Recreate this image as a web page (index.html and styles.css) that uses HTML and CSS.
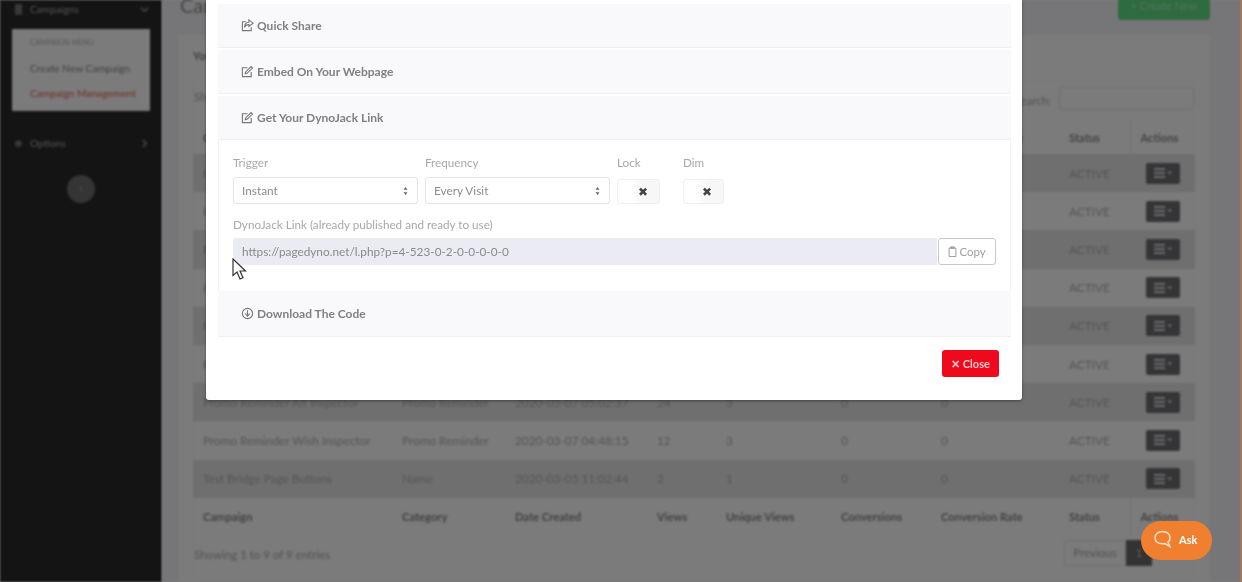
FILE: index.html
```html
<!DOCTYPE html>
<html lang="en">
<head>
<meta charset="utf-8">
<title>Campaign Management</title>
<link rel="stylesheet" href="styles.css">
</head>
<body>
<div class="app">
  <aside class="sidebar">
    <div class="nav-item">
      <svg class="nav-icon" viewBox="0 0 10 12"><path d="M1 0h8v12H1z"/></svg>
      <span class="nav-label">Campaigns</span>
      <svg class="nav-chev" viewBox="0 0 10 6"><path d="M1 1l4 4 4-4" /></svg>
    </div>
    <div class="submenu">
      <div class="sub-head">CAMPAIGN MENU</div>
      <div class="sub-link">Create New Campaign</div>
      <div class="sub-link sub-active">Campaign Management</div>
    </div>
    <div class="nav-item nav-options">
      <svg class="nav-icon" viewBox="0 0 12 12"><circle cx="6" cy="6" r="4.5"/></svg>
      <span class="nav-label">Options</span>
      <svg class="nav-chev" viewBox="0 0 6 10"><path d="M1 1l4 4-4 4"/></svg>
    </div>
    <div class="collapse-btn">‹</div>
  </aside>
  <main class="main">
    <div class="page-head">
      <h1 class="page-title">Campaign Management</h1>
      <div class="create-btn">+ Create New</div>
    </div>
    <section class="outer-card">
      <h2 class="card-title">Your Campaigns</h2>
      <div class="inner-card">
        <div class="table-tools">
          <span>Show 10 entries</span>
          <div class="search"><span>Search:</span><div class="search-box"></div></div>
        </div>
        <table class="table">
          <colgroup>
            <col class="c1"><col class="c2"><col class="c3"><col class="c4"><col class="c5"><col class="c6"><col class="c7"><col class="c8"><col class="c9">
          </colgroup>
          <thead>
            <tr><th>Campaign</th><th>Category</th><th>Date Created</th><th>Views</th><th>Unique Views</th><th>Conversions</th><th>Conversion Rate</th><th>Status</th><th class="th-actions">Actions</th></tr>
          </thead>
          <tbody id="rows">
            <tr><td>Promo Reminder</td><td>Promo Reminder</td><td>2020-03-09 10:12:31</td><td>30</td><td>4</td><td>0</td><td>0</td><td>ACTIVE</td><td><span class="act"><svg viewBox="0 0 18 10"><path d="M0 0h11v2H0zM0 4h11v2H0zM0 8h11v2H0zM13.5 3.5h4.5l-2.2 3z"/></svg></span></td></tr>
            <tr><td>Promo Reminder</td><td>Promo Reminder</td><td>2020-03-09 09:40:02</td><td>18</td><td>2</td><td>0</td><td>0</td><td>ACTIVE</td><td><span class="act"><svg viewBox="0 0 18 10"><path d="M0 0h11v2H0zM0 4h11v2H0zM0 8h11v2H0zM13.5 3.5h4.5l-2.2 3z"/></svg></span></td></tr>
            <tr><td>Promo Reminder</td><td>Promo Reminder</td><td>2020-03-08 16:22:10</td><td>15</td><td>3</td><td>0</td><td>0</td><td>ACTIVE</td><td><span class="act"><svg viewBox="0 0 18 10"><path d="M0 0h11v2H0zM0 4h11v2H0zM0 8h11v2H0zM13.5 3.5h4.5l-2.2 3z"/></svg></span></td></tr>
            <tr><td>Promo Reminder</td><td>Promo Reminder</td><td>2020-03-08 12:05:47</td><td>11</td><td>2</td><td>0</td><td>0</td><td>ACTIVE</td><td><span class="act"><svg viewBox="0 0 18 10"><path d="M0 0h11v2H0zM0 4h11v2H0zM0 8h11v2H0zM13.5 3.5h4.5l-2.2 3z"/></svg></span></td></tr>
            <tr><td>Promo Reminder</td><td>Promo Reminder</td><td>2020-03-07 22:51:19</td><td>9</td><td>1</td><td>0</td><td>0</td><td>ACTIVE</td><td><span class="act"><svg viewBox="0 0 18 10"><path d="M0 0h11v2H0zM0 4h11v2H0zM0 8h11v2H0zM13.5 3.5h4.5l-2.2 3z"/></svg></span></td></tr>
            <tr><td>Promo Reminder</td><td>Promo Reminder</td><td>2020-03-07 18:33:40</td><td>14</td><td>2</td><td>0</td><td>0</td><td>ACTIVE</td><td><span class="act"><svg viewBox="0 0 18 10"><path d="M0 0h11v2H0zM0 4h11v2H0zM0 8h11v2H0zM13.5 3.5h4.5l-2.2 3z"/></svg></span></td></tr>
            <tr><td>Promo Reminder Alt Inspector</td><td>Promo Reminder</td><td>2020-03-07 05:02:37</td><td>24</td><td>3</td><td>0</td><td>0</td><td>ACTIVE</td><td><span class="act"><svg viewBox="0 0 18 10"><path d="M0 0h11v2H0zM0 4h11v2H0zM0 8h11v2H0zM13.5 3.5h4.5l-2.2 3z"/></svg></span></td></tr>
            <tr><td>Promo Reminder Wish Inspector</td><td>Promo Reminder</td><td>2020-03-07 04:48:15</td><td>12</td><td>3</td><td>0</td><td>0</td><td>ACTIVE</td><td><span class="act"><svg viewBox="0 0 18 10"><path d="M0 0h11v2H0zM0 4h11v2H0zM0 8h11v2H0zM13.5 3.5h4.5l-2.2 3z"/></svg></span></td></tr>
            <tr><td>Test Bridge Page Buttons</td><td>Name</td><td>2020-03-05 11:02:44</td><td>2</td><td>1</td><td>0</td><td>0</td><td>ACTIVE</td><td><span class="act"><svg viewBox="0 0 18 10"><path d="M0 0h11v2H0zM0 4h11v2H0zM0 8h11v2H0zM13.5 3.5h4.5l-2.2 3z"/></svg></span></td></tr>
          </tbody>
          <tfoot>
            <tr><th>Campaign</th><th>Category</th><th>Date Created</th><th>Views</th><th>Unique Views</th><th>Conversions</th><th>Conversion Rate</th><th>Status</th><th class="th-actions">Actions</th></tr>
          </tfoot>
        </table>
        <div class="table-foot">
          <span>Showing 1 to 9 of 9 entries</span>
          <div class="pager"><span class="pg-prev">Previous</span><span class="pg-cur">1</span></div>
        </div>
      </div>
    </section>
  </main>
  <div class="backdrop"></div>
  <div class="edge"></div>

  <div class="modal">
    <div class="acc-item">
      <svg class="ic" viewBox="0 0 14 14"><path d="M5.5 3H1.500v9.500h9.500V9"/><path d="M8.500 1l4.500 3.500L8.500 8V6C6 6 4.600 6.800 4 9c-.3-3.500 1.500-5.500 4.500-5.500z"/></svg>
      <span>Quick Share</span>
    </div>
    <div class="acc-item">
      <svg class="ic" viewBox="0 0 14 14"><path d="M7 3H1.500v9.500H11V7.500"/><path d="M4.500 9.500l.5-2L10.800 1.700l1.600 1.600L6.500 9z"/></svg>
      <span>Embed On Your Webpage</span>
    </div>
    <div class="acc-item acc-open">
      <svg class="ic" viewBox="0 0 14 14"><path d="M7 3H1.500v9.500H11V7.500"/><path d="M4.500 9.500l.5-2L10.800 1.700l1.600 1.600L6.500 9z"/></svg>
      <span>Get Your DynoJack Link</span>
    </div>
    <div class="acc-body">
      <div class="field-row">
        <div class="field f-select">
          <label class="lbl">Trigger</label>
          <div class="select"><span>Instant</span><svg viewBox="0 0 6 10"><path d="M3 0l2.500 3.500h-5zM3 10L.5 6.500h5z"/></svg></div>
        </div>
        <div class="field f-select">
          <label class="lbl">Frequency</label>
          <div class="select"><span>Every Visit</span><svg viewBox="0 0 6 10"><path d="M3 0l2.500 3.500h-5zM3 10L.5 6.500h5z"/></svg></div>
        </div>
        <div class="field f-lock">
          <label class="lbl">Lock</label>
          <div class="toggle">✖</div>
        </div>
        <div class="field f-dim">
          <label class="lbl">Dim</label>
          <div class="toggle">✖</div>
        </div>
      </div>
      <label class="lbl lbl-link">DynoJack Link (already published and ready to use)</label>
      <div class="link-group">
        <div class="link-input">https://pagedyno.net/l.php?p=4-523-0-2-0-0-0-0-0</div>
        <div class="copy-btn">
          <svg viewBox="0 0 10 13"><path d="M1 2.500h8v10H1z"/><path d="M3 2.500V1h4v1.500z"/></svg>
          <span>Copy</span>
        </div>
      </div>
    </div>
    <div class="acc-item acc-last">
      <svg class="ic" viewBox="0 0 14 14"><circle cx="7" cy="7" r="5.500"/><path d="M7 3.500v6M4.500 7L7 9.800 9.500 7"/></svg>
      <span>Download The Code</span>
    </div>
    <div class="modal-foot">
      <div class="close-btn">✕ Close</div>
    </div>
  </div>

  <svg class="cursor" viewBox="0 0 16 22"><path d="M1 1v16.500l4-3.500 3 7 3-1.300-3-6.700h5.500z"/></svg>

  <div class="ask">
    <svg viewBox="0 0 20 20"><path d="M9.500 2.500c4.300 0 7.500 2.500 7.500 6.200 0 2-.8 3.500-2 4.500l1.800 4.300-5-3c-.7.200-1.500.2-2.300.2C5.200 14.700 2 12.300 2 8.700 2 5 5.200 2.500 9.500 2.500z"/></svg>
    <span>Ask</span>
  </div>
</div>
</body>
</html>
```
FILE: styles.css
```css
* { box-sizing: border-box; }
html, body { margin: 0; padding: 0; }
body { font-family: "Lato", "Noto Sans", "Liberation Sans", sans-serif; background: #fff; }

.app {
  position: relative;
  display: flex;
  width: 1242px;
  height: 582px;
  overflow: hidden;
}

/* sidebar */
.sidebar {
  flex: 0 0 162px;
  min-width: 0;
  background: #282828;
  color: #a8a8a8;
  font-size: 10.200px;
  filter: blur(.9px);
}
.nav-item {
  display: flex;
  align-items: center;
  height: 18px;
  padding: 0 13px 0 14px;
}
.nav-icon { width: 9px; height: 11px; fill: #707070; margin-right: 7px; }
.nav-label { flex: 1; }
.nav-chev { width: 9px; height: 9px; fill: none; stroke: #8a8a8a; stroke-width: 1.800; }
.submenu {
  margin: 11px 12px 0;
  height: 82px;
  background: #f6f6f6;
  border-radius: 1px;
  padding: 9px 18px;
  font-size: 10.200px;
  color: #808080;
}
.sub-head { font-size: 7.500px; color: #b0b0b0; height: 10px; line-height: 10px; margin-bottom: 10px; }
.sub-link { height: 25px; line-height: 21px; white-space: nowrap; }
.sub-active { color: #e0604c; }
.nav-options { margin-top: 23px; }
.collapse-btn {
  width: 28px;
  height: 28px;
  margin: 23px 0 0 67px;
  border-radius: 50%;
  background: #6a6a6a;
  color: #aaa;
  text-align: center;
  line-height: 26px;
  font-size: 12px;
}

/* main page */
.main {
  flex: 1;
  min-width: 0;
  background: #ececf0;
  padding-left: 16px;
  padding-right: 32px;
  color: #a4a4a4;
  font-size: 11.500px;
  filter: blur(.9px);
}
.page-head {
  display: flex;
  justify-content: space-between;
  align-items: center;
  height: 30px;
  margin-top: -10px;
  margin-left: 2px;
}
.page-title { margin: 0; font-size: 20px; font-weight: 400; color: #8a8a8a; }
.create-btn {
  width: 92px;
  height: 30px;
  line-height: 32px;
  text-align: center;
  background: #5cd67c;
  color: #a5e8b5;
  border-radius: 3px;
  font-size: 11px;
}
.outer-card {
  height: 580px;
  margin-top: 14px;
  background: #f6f6f6;
  padding: 0 15px;
}
.card-title {
  margin: 0;
  height: 46px;
  padding-top: 14px;
  line-height: 16px;
  font-size: 11px;
  font-weight: 700;
  color: #808080;
}
.inner-card {
  height: 500px;
  border: 1px solid #f2f2f2;
  border-radius: 3px;
}
.table-tools {
  display: flex;
  justify-content: space-between;
  align-items: flex-start;
  height: 39px;
  padding-top: 9px;
}
.search { display: flex; align-items: center; gap: 8px; }
.search-box { width: 135px; height: 23px; border: 1px solid #e4e4e4; border-radius: 2px; margin-top: -3px; }
.table {
  width: 1002px;
  border-collapse: collapse;
  table-layout: fixed;
  margin-left: -1px;
}
.c1 { width: 199px; } .c2 { width: 113px; } .c3 { width: 142px; }
.c4 { width: 69px; } .c5 { width: 115px; } .c6 { width: 100px; }
.c7 { width: 128px; } .c8 { width: 71px; } .c9 { width: 65px; }
.table th, .table td {
  padding: 0 0 0 10px;
  text-align: left;
  white-space: nowrap;
  overflow: hidden;
  font-size: 11.800px;
}
.table thead tr { height: 34px; }
.table tfoot tr { height: 38px; }
.table th { font-weight: 700; color: #848484; font-size: 11.200px; }
.table tbody tr { height: 38.200px; }
.table tbody tr:nth-child(odd) { background: #dedede; }
.table td { color: #aaaaaa; }
.th-actions { border-left: 1px solid #e6e6e6; }
.act {
  display: inline-flex;
  align-items: center;
  justify-content: center;
  width: 34px;
  height: 21px;
  margin-left: 6px;
  border-radius: 2px;
  background: #6a6a70;
}
.act svg { width: 20px; height: 10px; fill: #d8d8d8; }
.table-foot {
  display: flex;
  justify-content: space-between;
  align-items: center;
  height: 38px;
  padding-right: 42px;
}
.pager { display: flex; height: 26px; line-height: 26px; margin-top: -4px; }
.pg-prev { width: 62px; text-align: center; border: 1px solid #e2e2e2; border-radius: 3px 0 0 3px; line-height: 24px; }
.pg-cur { width: 26px; text-align: center; background: #666; color: #bbb; }
.edge { position: absolute; right: 0; top: 0; bottom: 0; width: 2px; background: #a5755c; }

/* backdrop and modal */
.backdrop { position: absolute; inset: 0; background: rgba(0, 0, 0, .5); }
.modal {
  position: absolute;
  left: 206px;
  top: 0;
  width: 816px;
  height: 400px;
  padding: 4px 11px 0 12px;
  background: #fff;
  border-radius: 0 0 3px 3px;
  box-shadow: 0 1px 3px rgba(0, 0, 0, .4);
  color: #777;
  filter: blur(.4px);
}
.acc-item {
  display: flex;
  align-items: center;
  gap: 3px;
  height: 44px;
  margin-bottom: 2px;
  padding-left: 23px;
  background: #f9f9fc;
  border-bottom: 1px solid #f0f0f3;
  font-size: 12px;
  font-weight: 700;
  color: #808080;
}
.acc-open { margin-bottom: 0; }
.acc-last { height: 46px; margin-bottom: 0; }
.ic { width: 13px; height: 13px; fill: none; stroke: #777; stroke-width: 1.200; }
.acc-body {
  height: 151px;
  padding: 14px 14px 0;
  border: solid #f2f2f4;
  border-width: 0 1px;
}
.field-row { display: flex; }
.field { display: flex; flex-direction: column; }
.f-select { width: 185px; margin-right: 7px; }
.f-lock { width: 43px; margin-right: 23px; }
.f-dim { width: 41px; }
.lbl { font-size: 11.700px; color: #a8a8a8; line-height: 16px; height: 23px; }
.select {
  display: flex;
  align-items: center;
  justify-content: space-between;
  height: 27px;
  padding: 0 9px 0 8px;
  border: 1px solid #e3e3e8;
  border-radius: 3px;
  font-size: 11.800px;
  color: #8c8c8c;
}
.select svg { width: 5px; height: 8px; fill: #666; }
.toggle {
  height: 25px;
  margin-top: 2px;
  border: 1px solid #efeff2;
  border-radius: 3px;
  background: linear-gradient(90deg, #fff 30%, #f7f7f8 60%);
  text-align: right;
  padding-right: 11px;
  line-height: 23px;
  font-size: 12px;
  color: #444;
}
.lbl-link { display: block; margin-top: 12px; }
.link-group { display: flex; height: 27px; margin-top: -1px; }
.link-input {
  width: 705px;
  padding-left: 9px;
  line-height: 27px;
  background: #ebebf3;
  border-radius: 3px 0 0 3px;
  font-size: 11.800px;
  color: #8a8a8a;
}
.copy-btn {
  display: flex;
  align-items: center;
  justify-content: center;
  gap: 2px;
  width: 58px;
  margin-left: 1px;
  border: 1px solid #c8c8cc;
  border-radius: 3px;
  font-size: 11.500px;
  color: #a0a0a0;
}
.copy-btn svg { width: 9px; height: 11px; fill: none; stroke: #888; stroke-width: 1; }
.modal-foot { display: flex; justify-content: flex-end; padding: 13px 12px 0 0; }
.close-btn {
  width: 57px;
  height: 27px;
  line-height: 27px;
  text-align: center;
  background: #ee0a1c;
  color: #ffc9cc;
  border-radius: 3px;
  font-size: 11px;
  font-weight: 700;
}

/* overlays */
.cursor {
  position: absolute;
  left: 232px;
  top: 258px;
  width: 16px;
  height: 22px;
  fill: #fff;
  stroke: #333;
  stroke-width: 1.200;
}
.ask {
  position: absolute;
  left: 1141px;
  top: 521px;
  display: flex;
  align-items: center;
  gap: 6px;
  width: 71px;
  height: 39px;
  padding: 0 0 3px 12px;
  border-radius: 20px;
  background: #f08030;
  color: #fff;
  font-size: 11px;
  font-weight: 700;
  filter: blur(.3px);
}
.ask svg { width: 20px; height: 20px; fill: none; stroke: #ffe2c8; stroke-width: 1.500; }
```
